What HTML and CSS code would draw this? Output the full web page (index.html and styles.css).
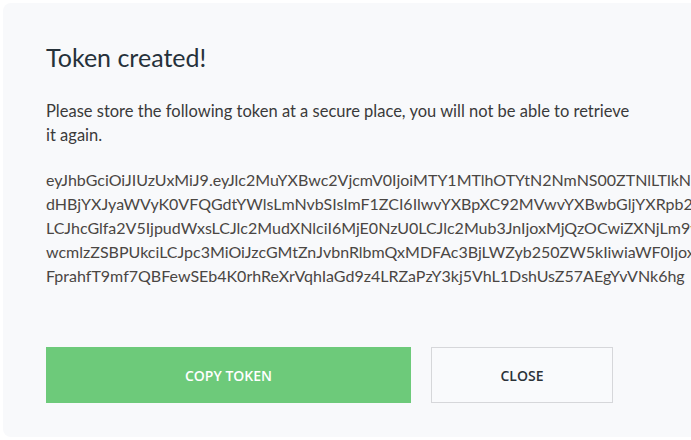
FILE: index.html
```html
<!DOCTYPE html>
<html lang="en">
  <head>
    <meta charset="UTF-8" />
    <title>Token created</title>
    <link rel="stylesheet" href="styles.css">
  </head>
  <body>
    <div class="modal">
      <h1>Token created!</h1>
      <p class="note">Please store the following token at a secure place, you will not be able to retrieve it again.</p>
      <div class="token">
        <span>eyJhbGciOiJIUzUxMiJ9.eyJlc2MuYXBwc2VjcmV0IjoiMTY1MTlhOTYtN2NmNS00ZTNlLTlkNDQtZTg4ZjE3YjA0MmQ2IiwiZW1haWwiOiJ</span>
        <span>dHBjYXJyaWVyK0VFQGdtYWlsLmNvbSIsImF1ZCI6IlwvYXBpXC92MVwvYXBwbGljYXRpb24iLCJzdWIiOiIxMjM0NTY3ODkw</span>
        <span>LCJhcGlfa2V5IjpudWxsLCJlc2MudXNlciI6MjE0NzU0LCJlc2Mub3JnIjoxMjQzOCwiZXNjLm9yZ05hbWUiOiJFbnRlcnByaXNl</span>
        <span>wcmlzZSBPUkciLCJpc3MiOiJzcGMtZnJvbnRlbmQxMDFAc3BjLWZyb250ZW5kIiwiaWF0IjoxNjE2MDAwMDAwfQ.</span>
        <span>FprahfT9mf7QBFewSEb4K0rhReXrVqhIaGd9z4LRZaPzY3kj5VhL1DshUsZ57AEgYvVNk6hg</span>
      </div>
      <div class="actions">
        <button class="btn btn-copy">Copy token</button>
        <button class="btn btn-close">Close</button>
      </div>
    </div>
  </body>
</html>
```

FILE: styles.css
```css
html,
body {
  margin: 0;
  padding: 0;
  background: #fff;
  overflow: hidden;
}

body {
  padding: 3px 0 0 3px;
}

.modal {
  width: 760px;
  box-sizing: border-box;
  background: #f8f9fb;
  border-radius: 8px;
  padding: 40px 0 34px 43px;
  font-family: Lato, "Noto Sans", sans-serif;
}

h1 {
  margin: 0;
  font-size: 25px;
  line-height: 28px;
  font-weight: 400;
  color: #26313a;
}

.note {
  width: 588px;
  margin: 28px 0 0 0;
  font-size: 16.5px;
  line-height: 24px;
  color: #3a3a3a;
}

.token {
  margin-top: 21px;
  font-size: 16px;
  line-height: 24px;
  color: #4a4643;
}

.token span {
  display: block;
  white-space: nowrap;
}

.actions {
  display: flex;
  gap: 20px;
  margin-top: 59px;
}

.btn {
  height: 56px;
  font-family: "Open Sans", sans-serif;
  font-size: 14px;
  font-weight: 600;
  text-transform: uppercase;
  border-radius: 0;
  cursor: pointer;
}

.btn-copy {
  width: 365px;
  background: #6dca7a;
  border: none;
  color: #fff;
}

.btn-close {
  width: 182px;
  background: #f9fafc;
  border: 1px solid #d6d7da;
  color: #2b3238;
}
```
